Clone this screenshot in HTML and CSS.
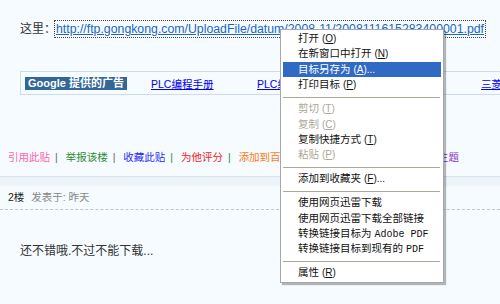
FILE: index.html
```html
<!DOCTYPE html>
<html lang="zh-CN">
<head>
    <meta charset="UTF-8">
    <title>帖子</title>
    <link rel="stylesheet" href="styles.css">
</head>
<body>

    <!-- Download link line -->
    <p class="url-line">这里：<a class="file-link" href="#">http://ftp.gongkong.com/UploadFile/datum/2008-11/2008111615283400001.pdf</a></p>

    <!-- Google ad strip -->
    <div class="ad-box">
        <span class="ad-label">Google 提供的广告</span>
        <a class="ad-link" href="#">PLC编程手册</a>
        <a class="ad-link" href="#">PLC编程软件</a>
        <a class="ad-link" href="#">西门子PLC</a>
        <a class="ad-link" href="#">三菱PLC</a>
    </div>

    <!-- Post actions -->
    <div class="actions">
        <a class="act pink" href="#">引用此贴</a><span class="bar">|</span>
        <a class="act green" href="#">举报该楼</a><span class="bar">|</span>
        <a class="act blue" href="#">收藏此贴</a><span class="bar green">|</span>
        <a class="act red" href="#">为他评分</a><span class="bar green">|</span>
        <a class="act orange" href="#">添加到百度搜藏</a><span class="bar green">|</span>
        <a class="act purple" href="#">推荐给好友</a><span class="bar green">|</span>
        <a class="act purple" href="#">返回本版主题</a>
    </div>

    <div class="divider"></div>

    <!-- Reply -->
    <div class="post-meta"><b>2楼</b> <span class="when">发表于: 昨天</span></div>
    <p class="post-body">还不错哦.不过不能下载...</p>

    <!-- Right click menu -->
    <ul class="ctx-menu">
        <li>打开 <span class="key">(<u>O</u>)</span></li>
        <li>在新窗口中打开 <span class="key">(<u>N</u>)</span></li>
        <li class="active">目标另存为 <span class="key">(<u>A</u>)...</span></li>
        <li>打印目标 <span class="key">(<u>P</u>)</span></li>
        <li class="sep"></li>
        <li class="off">剪切 <span class="key">(<u>T</u>)</span></li>
        <li class="off">复制 <span class="key">(<u>C</u>)</span></li>
        <li>复制快捷方式 <span class="key">(<u>T</u>)</span></li>
        <li class="off">粘贴 <span class="key">(<u>P</u>)</span></li>
        <li class="sep"></li>
        <li>添加到收藏夹 <span class="key">(<u>F</u>)...</span></li>
        <li class="sep"></li>
        <li>使用网页迅雷下载</li>
        <li>使用网页迅雷下载全部链接</li>
        <li>转换链接目标为 <span class="mono">Adobe PDF</span></li>
        <li>转换链接目标到现有的 <span class="mono">PDF</span></li>
        <li class="sep"></li>
        <li>属性 <span class="key">(<u>R</u>)</span></li>
    </ul>

</body>
</html>
```

FILE: styles.css
```css
/* Page base */
body {
    margin: 0;
    background: #f5fbff;
    font-family: "Liberation Sans", "Noto Sans CJK SC", sans-serif;
    color: #333;
    width: 500px;
    height: 304px;
    overflow: hidden;
    position: relative;
}

a {
    text-decoration: underline;
}

/* Link line */
.url-line {
    margin: 0;
    padding: 21px 0 0 20px;
    height: 17px;
    line-height: 17px;
    font-size: 12px;
    white-space: nowrap;
}

.file-link {
    color: #1a66c2;
    font-size: 12.3px;
    outline: 1px dotted #444;
    outline-offset: 1px;
}

/* Ad strip */
.ad-box {
    margin: 33px 0 0 20px;
    height: 22px;
    border: 1px solid #c9dbec;
    border-right: none;
    display: flex;
    align-items: center;
    white-space: nowrap;
    overflow: hidden;
}

.ad-label {
    flex-shrink: 0;
    margin-left: 4px;
    width: 102px;
    height: 13px;
    line-height: 13px;
    background: #336699;
    color: #fff;
    font-weight: bold;
    font-size: 11px;
    text-align: center;
}

.ad-link {
    flex-shrink: 0;
    color: #0000ee;
    font-size: 10.5px;
    width: 112px;
}

.ad-link:first-of-type {
    margin-left: 24px;
    width: 106px;
}

/* Actions row */
.actions {
    margin-top: 54px;
    padding-left: 8px;
    height: 16px;
    line-height: 16px;
    font-size: 10.5px;
    white-space: nowrap;
    overflow: hidden;
}

.act {
    text-decoration: none;
}

.bar {
    color: #666;
    margin: 0 5px;
}

.pink { color: #ff66aa; }
.green { color: #2f8a2f; }
.blue { color: #2a2af0; }
.red { color: #ee1c1c; }
.orange { color: #ff7a12; }
.purple { color: #8a33cc; }

.divider {
    margin-top: 11px;
    height: 9px;
    border-top: 1px solid #d6e4ef;
    background: #ecf4fa;
}

/* Reply block */
.post-meta {
    padding: 3px 8px 4px;
    height: 16px;
    line-height: 16px;
    font-size: 10.5px;
    border-bottom: 1px dashed #c4c4c4;
}

.post-meta b {
    font-weight: normal;
    color: #222;
}

.when {
    color: #888;
    margin-left: 4px;
}

.post-body {
    margin: 0;
    padding: 33px 0 0 20px;
    line-height: 16px;
    font-size: 12px;
    color: #333;
}

/* Context menu overlay */
.ctx-menu {
    position: absolute;
    left: 280px;
    top: 29px;
    width: 158px;
    margin: 0;
    padding: 1px 2px;
    list-style: none;
    background: #fff;
    border: 1px solid #a7a6aa;
    box-shadow: 2px 2px 1px rgba(0, 0, 0, 0.28);
    font-size: 10.5px;
    color: #111;
}

.ctx-menu li {
    height: 15.4px;
    line-height: 15.4px;
    padding-left: 15px;
    white-space: nowrap;
}

.ctx-menu li.active {
    background: #316ac5;
    color: #fff;
}

.ctx-menu li.off {
    color: #aca899;
}

.ctx-menu li.sep {
    height: 8.6px;
    padding: 0;
    position: relative;
}

.ctx-menu li.sep::after {
    content: "";
    position: absolute;
    left: 0;
    right: 1px;
    top: 4px;
    border-top: 1px solid #aca899;
}

.key {
    font-size: 10px;
}

.mono {
    font-family: "Liberation Mono", monospace;
    font-size: 10px;
}
```
